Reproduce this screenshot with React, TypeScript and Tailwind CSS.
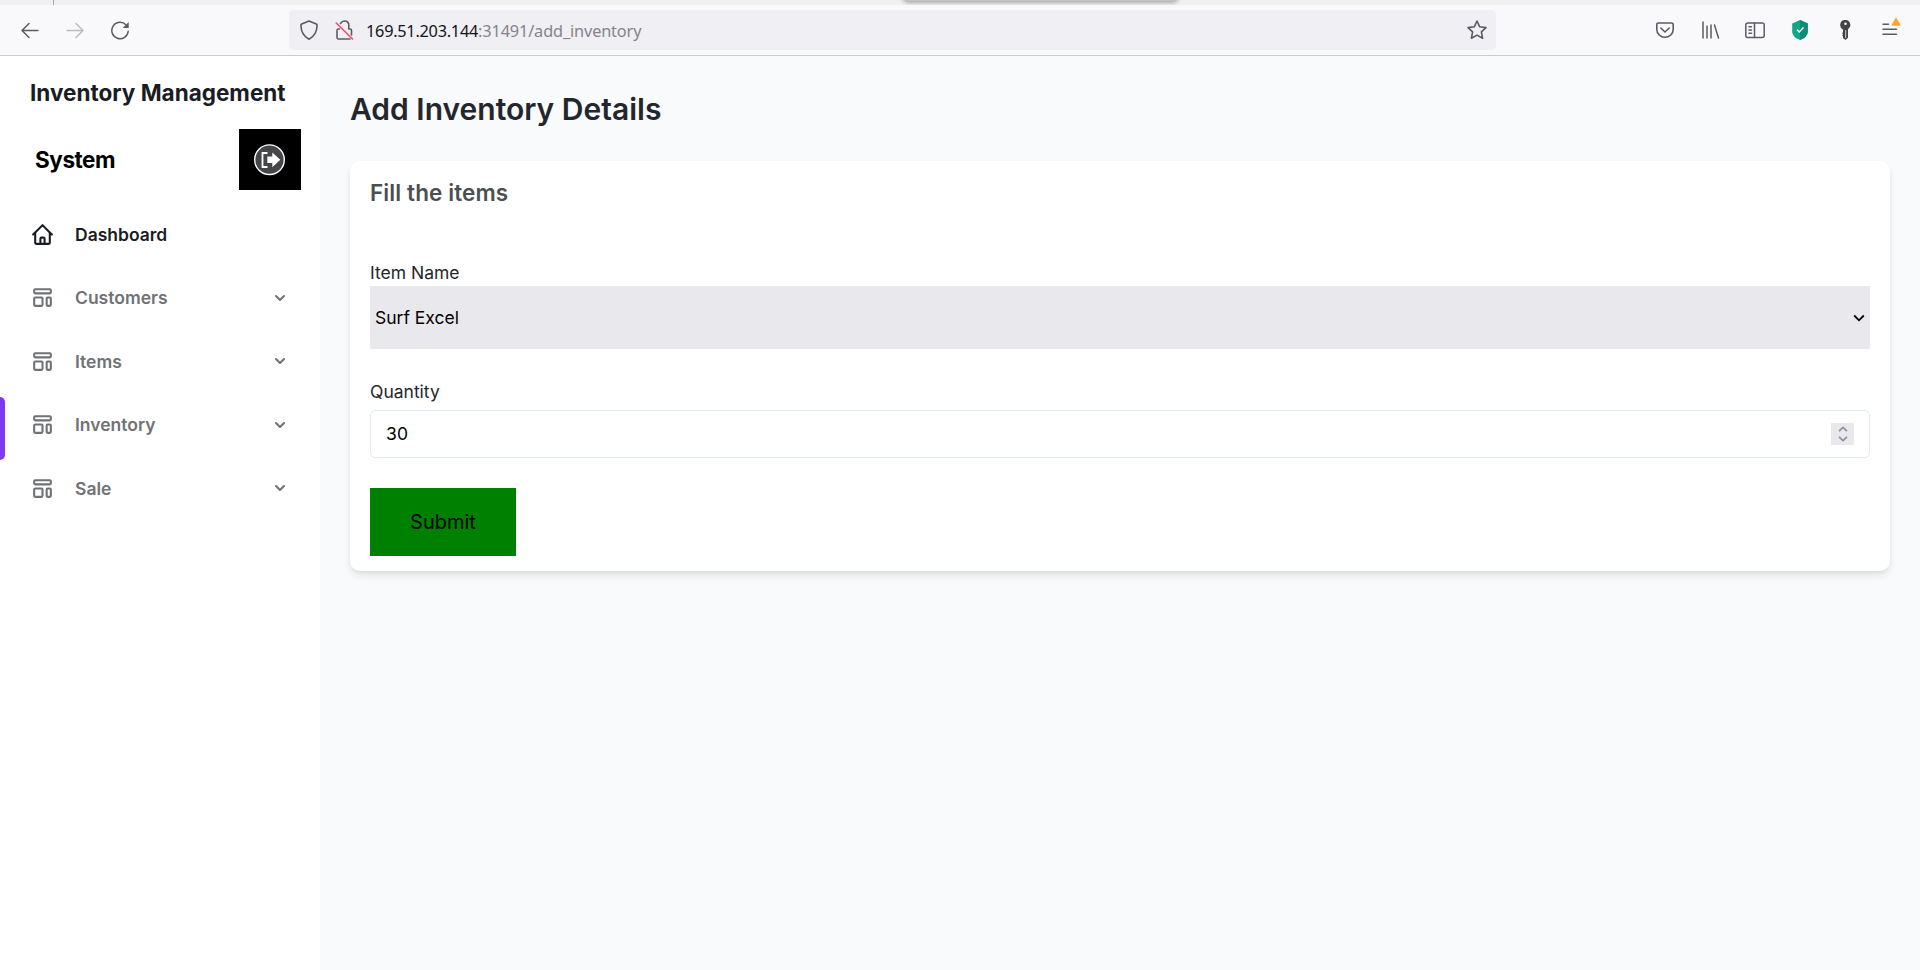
import React from "react";

function BrowserBar() {
  return (
    <header className="shrink-0">
      <div className="relative h-[5px] bg-[#f0f0f0] overflow-hidden">
        <div className="absolute left-[53px] top-0 h-[5px] w-px bg-[#a9a9a9]" />
        <div className="absolute left-[904px] -top-[9px] h-[10px] w-[273px] rounded-[4px] bg-[#c4c4c4] shadow-[0_0_5px_1px_rgba(0,0,0,0.4)]" />
      </div>
      <div className="flex h-[51px] items-center border-b border-[#cccccf] bg-[#f9f9fb]">
        <div className="flex w-[289px] items-center pl-[20px] text-[#5b5b66]">
          <svg className="h-5 w-5" viewBox="0 0 20 20" fill="none" stroke="currentColor" strokeWidth="1.5" strokeLinecap="round" strokeLinejoin="round">
            <path d="M18 10.5H2M9 3.5l-7 7 7 7" />
          </svg>
          <svg className="ml-[25px] h-5 w-5 text-[#bcbcc2]" viewBox="0 0 20 20" fill="none" stroke="currentColor" strokeWidth="1.5" strokeLinecap="round" strokeLinejoin="round">
            <path d="M2 10.5h16M11 3.5l7 7-7 7" />
          </svg>
          <svg className="ml-[25px] h-5 w-5" viewBox="0 0 20 20" fill="none" stroke="currentColor" strokeWidth="1.5" strokeLinecap="round">
            <path d="M18.2 11.2a8.2 8.2 0 1 1-2.3-6.4" />
            <path d="M18.7 2v6h-6z" fill="currentColor" stroke="none" />
          </svg>
        </div>
        <div className="flex h-10 w-[1207px] items-center rounded-[5px] bg-[#f0eff4] pl-[10px] pr-[8px] text-[#5b5b66]">
          <svg className="h-5 w-5" viewBox="0 0 20 20" fill="none" stroke="currentColor" strokeWidth="1.6" strokeLinejoin="round">
            <path d="M10 1 17.3 4q.9.4.8 1.3C17.9 12 15.600 16.500 10 19.200 4.400 16.500 2.100 12 1.900 5.300q-.1-.9.800-1.300z" />
          </svg>
          <svg className="ml-[15px] h-5 w-5" viewBox="0 0 20 20" fill="none" strokeLinecap="round" strokeLinejoin="round">
            <path d="M6.500 3.500C7.500 1.800 9 1 10.500 1c2.500 0 4.300 1.800 4.300 4.300V9h1.200q1.500 0 1.500 1.500V15M5.500 9H4.500Q3 9 3 10.500v7Q3 19 4.500 19H16" stroke="#5b5b66" strokeWidth="1.600" />
            <path d="M2.200 3 18.500 19" stroke="#f9466b" strokeWidth="1.600" />
          </svg>
          <span className="ml-[12px] whitespace-nowrap pt-[2px] font-['Noto_Sans',sans-serif] text-[16.3px] leading-5 tracking-[-0.25px] text-[#15141a]">
            169.51.203.144<span className="tracking-[-0.13px] text-[#85848b]">:31491/add_inventory</span>
          </span>
          <svg className="ml-auto h-[22px] w-[22px]" viewBox="0 0 22 22" fill="none" stroke="currentColor" strokeWidth="1.6" strokeLinejoin="round">
            <path d="M11 2l2.700 5.800 6.300.8-4.600 4.300 1.200 6.300L11 16.100l-5.600 3.100 1.200-6.300L2 8.600l6.300-.8z" />
          </svg>
        </div>
        <div className="flex flex-1 items-center justify-end gap-[25px] pr-[20px] text-[#5b5b66]">
          <svg className="h-5 w-5" viewBox="0 0 20 20" fill="none" stroke="currentColor" strokeWidth="1.600" strokeLinecap="round" strokeLinejoin="round">
            <path d="M3.500 3h13Q18.200 3 18.200 4.700V9.500a8.200 7.800 0 0 1-16.400 0V4.700Q1.800 3 3.500 3zM5.800 8l4.200 4L14.200 8" />
          </svg>
          <svg className="h-5 w-5" viewBox="0 0 20 20" fill="none" stroke="currentColor" strokeWidth="1.500" strokeLinecap="round">
            <path d="M3 2v16M7 6v12M11 5v13M14.500 5l4 13" />
          </svg>
          <svg className="h-5 w-5" viewBox="0 0 20 20" fill="none" stroke="currentColor" strokeWidth="1.500" strokeLinecap="round">
            <rect x=".8" y="3" width="18.400" height="14.500" rx="2" />
            <path d="M9.500 3v14.500M4 6.800h2.500M4 10h2.500M4 13.200h2.500" />
          </svg>
          <svg className="h-5 w-5" viewBox="0 0 20 20">
            <path d="M10 0 17.800 3.500V12Q17.500 17 10 20 2.500 17 2.200 12V3.500z" fill="#12a587" />
            <path d="M10 0 17.800 3.500V12Q17.500 17 10 20z" fill="#0c8b76" />
            <path d="M7 9.800l2.200 2.200L13.500 7.500" fill="none" stroke="#fff" strokeWidth="1.500" />
          </svg>
          <svg className="h-5 w-5" viewBox="0 0 20 20">
            <path d="M10 0a5 5 0 0 1 3 9.200v8.600L10.500 20 8 18v-1.500l-.8-1 .8-1-.8-1L8 12V9.500A5 5 0 0 1 10 0z" fill="#444" />
            <circle cx="10.500" cy="3.800" r="1.300" fill="#f9f9fb" />
            <path d="M10.700 10v8" stroke="#ddd" strokeWidth=".9" />
          </svg>
          <svg className="h-5 w-5 overflow-visible" viewBox="0 0 20 20" fill="none" stroke="currentColor" strokeWidth="1.500" strokeLinecap="round">
            <path d="M3 4.200h5.500M3 9.200h13.500M3 14.300h13.500" />
            <path d="M16-1.500 19.700 5h-7.400z" fill="#ffa436" stroke="#ffa436" strokeLinejoin="round" />
          </svg>
        </div>
      </div>
    </header>
  );
}

const outline = {
  fill: "none",
  stroke: "currentColor",
  strokeWidth: 2,
  strokeLinecap: "round",
  strokeLinejoin: "round",
  viewBox: "0 0 24 24",
} as const;

function HomeIcon() {
  return (
    <svg className="h-[25px] w-[25px]" {...outline}>
      <path d="M3 12l2-2m0 0l7-7 7 7M5 10v10a1 1 0 001 1h3m10-11l2 2m-2-2v10a1 1 0 01-1 1h-3m-6 0a1 1 0 001-1v-4a1 1 0 011-1h2a1 1 0 011 1v4a1 1 0 001 1m-6 0h6" />
    </svg>
  );
}

function TemplateIcon() {
  return (
    <svg className="h-[25px] w-[25px]" {...outline}>
      <path d="M4 5a1 1 0 011-1h14a1 1 0 011 1v2a1 1 0 01-1 1H5a1 1 0 01-1-1V5zM4 13a1 1 0 011-1h6a1 1 0 011 1v6a1 1 0 01-1 1H5a1 1 0 01-1-1v-6zM16 13a1 1 0 011-1h2a1 1 0 011 1v6a1 1 0 01-1 1h-2a1 1 0 01-1-1v-6z" />
    </svg>
  );
}

function NavGroup({ label, active = false }: { label: string; active?: boolean }) {
  return (
    <li className="relative flex h-[63.500px] items-center pl-[30px] pr-[30px] text-[#707275]">
      {active && <span className="absolute left-0 top-1 h-[63px] w-[5px] rounded-r-[5px] bg-[#7e3af2]" />}
      <TemplateIcon />
      <span className="ml-5">{label}</span>
      <svg className="ml-auto h-5 w-5" viewBox="0 0 20 20" fill="currentColor">
        <path fillRule="evenodd" clipRule="evenodd" d="M5.293 7.293a1 1 0 011.414 0L10 10.586l3.293-3.293a1 1 0 111.414 1.414l-4 4a1 1 0 01-1.414 0l-4-4a1 1 0 010-1.414z" />
      </svg>
    </li>
  );
}

function Sidebar() {
  return (
    <aside className="w-[320px] shrink-0 bg-white">
      <h2 className="whitespace-nowrap pl-[30px] pt-[20px] text-[22.5px] font-bold leading-[34px] text-[#1a1c23]">
        Inventory Management
      </h2>
      <div className="mt-[19px] flex h-[61px] items-center justify-between pl-[35px] pr-[19px]">
        <span className="text-[22.5px] font-bold leading-[34px] tracking-[-0.45px] text-black">System</span>
        <button className="flex h-[61px] w-[62px] items-center justify-center bg-black">
          <svg className="h-8 w-8" viewBox="0 0 32 32">
            <circle cx="15.500" cy="15.700" r="14.800" fill="#45464a" stroke="#fff" strokeWidth="1.400" />
            <path d="M13.500 9H8.500v14h5" fill="none" stroke="#fff" strokeWidth="1.800" />
            <path d="M13.300 12.500h5V8.500l8 7.300-8 7.400v-4.200h-5z" fill="#fff" />
          </svg>
        </button>
      </div>
      <ul className="mt-[12.400px] text-[17.5px] font-semibold leading-[25px]">
        <li className="flex h-[63.500px] items-center px-[30px] text-[#1a1c23]">
          <HomeIcon />
          <span className="ml-5">Dashboard</span>
        </li>
        <NavGroup label="Customers" />
        <NavGroup label="Items" />
        <NavGroup label="Inventory" active />
        <NavGroup label="Sale" />
      </ul>
    </aside>
  );
}

function InventoryForm() {
  return (
    <section className="mt-[32px] h-[410px] rounded-[10px] bg-white px-5 pt-[15px] text-[17.5px] leading-[26px] text-[#24262d] shadow-[0_5px_8px_-1px_rgba(0,0,0,0.1),0_2px_5px_-1px_rgba(0,0,0,0.06)]">
      <h4 className="text-[22.5px] font-semibold leading-[34px] tracking-[0.1px] text-[#4c4f52]">Fill the items</h4>
      <div className="mt-[50px]">Item Name</div>
      <div className="flex h-[63px] items-center justify-between bg-[#e9e9ed] pl-[5px] pr-[5.500px] text-black">
        <span>Surf Excel</span>
        <svg className="h-3 w-3" viewBox="0 0 12 12" fill="none" stroke="currentColor" strokeWidth="1.800">
          <path d="M1.200 3.500 6 8.300l4.800-4.800" />
        </svg>
      </div>
      <div className="mt-[30px]">Quantity</div>
      <div className="mt-[5px] flex h-[48px] items-center justify-between rounded-[5px] border border-[#e2e8f0] pl-[15px] pr-[15px] text-black">
        <span className="tracking-[0.3px]">30</span>
        <span className="flex h-[22px] w-[23px] items-center justify-center bg-[#e9e9ed]">
          <svg className="h-4 w-[10px] text-[#8f8f9d]" viewBox="0 0 10 16" fill="none" stroke="currentColor" strokeWidth="1.700">
            <path d="M1 5.200 5 1.400l4 3.800M1 10.800l4 3.800 4-3.800" />
          </svg>
        </span>
      </div>
      <button className="mt-[30px] flex h-[68px] w-[146px] items-center justify-center bg-[#008000] text-[20px] text-black">
        Submit
      </button>
    </section>
  );
}

export default function App() {
  return (
    <div className="flex h-[970px] w-[1920px] flex-col overflow-hidden bg-[#f9fafc] font-['Inter',sans-serif]">
      <BrowserBar />
      <div className="flex flex-1">
        <Sidebar />
        <main className="flex-1 px-[30px] pt-[33px]">
          <h2 className="text-[30px] font-semibold leading-[40px] text-[#24262d]">Add Inventory Details</h2>
          <InventoryForm />
        </main>
      </div>
    </div>
  );
}
